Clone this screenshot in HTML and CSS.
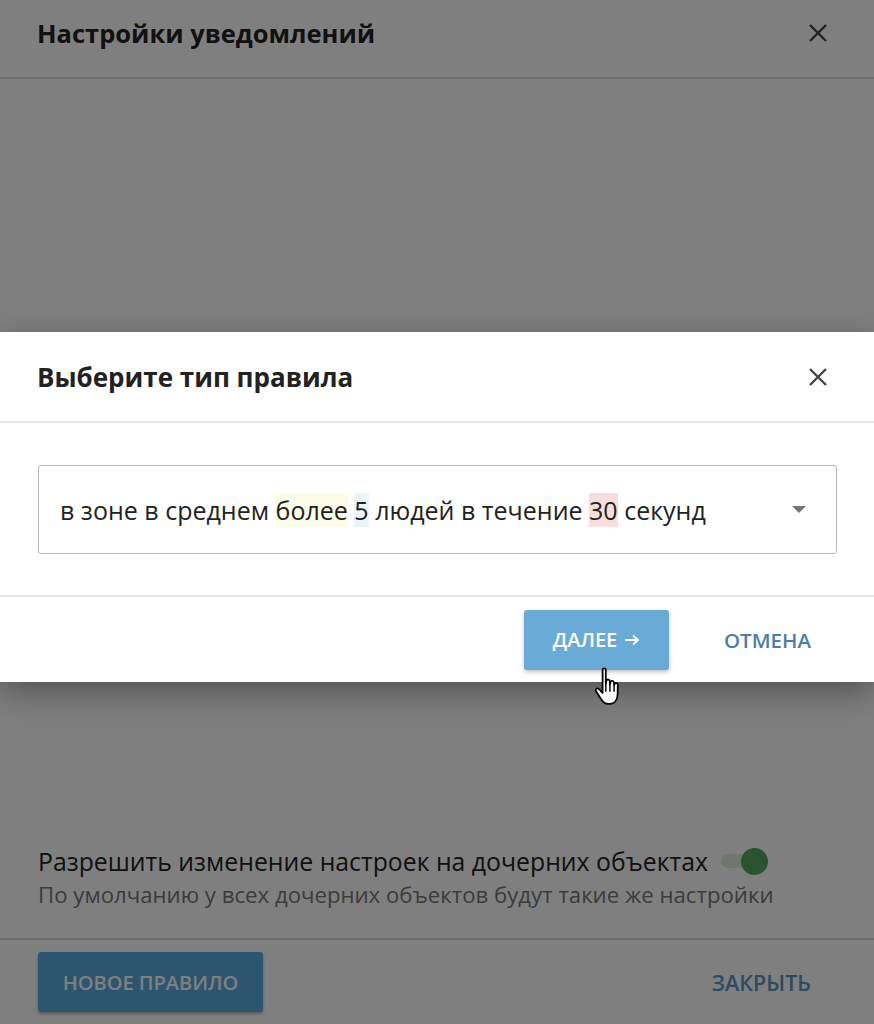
FILE: index.html
```html
<!DOCTYPE html>
<html lang="ru">
<head>
<meta charset="utf-8">
<link rel="stylesheet" href="styles.css">
</head>
<body>
<div class="page">
  <header class="page-head">
    <h1 class="page-title">Настройки уведомлений</h1>
    <svg class="close" viewBox="0 0 24 24" width="24" height="24"><path d="M4 4 L20 20 M20 4 L4 20" stroke="#444" stroke-width="2.4" fill="none"/></svg>
  </header>
  <main class="page-body"></main>
  <section class="inherit">
    <div class="inherit-row">
      <span class="inherit-label">Разрешить изменение настроек на дочерних объектах</span>
      <span class="toggle"><span class="track"></span><span class="thumb"></span></span>
    </div>
    <div class="inherit-hint">По умолчанию у всех дочерних объектов будут такие же настройки</div>
  </section>
  <footer class="page-foot">
    <button class="btn-primary">НОВОЕ ПРАВИЛО</button>
    <button class="btn-text close-btn">ЗАКРЫТЬ</button>
  </footer>
</div>
<div class="overlay"></div>
<div class="modal">
  <div class="modal-head">
    <h2 class="modal-title">Выберите тип правила</h2>
    <svg class="close" viewBox="0 0 24 24" width="24" height="24"><path d="M4 4 L20 20 M20 4 L4 20" stroke="#444" stroke-width="2.4" fill="none"/></svg>
  </div>
  <div class="modal-body">
    <div class="select">
      <span class="select-text">в зоне в среднем <span class="hl-y">более</span> <span class="hl-b">5</span> людей в течение <span class="hl-r">30</span> секунд</span>
      <span class="caret"></span>
    </div>
  </div>
  <div class="modal-foot">
    <button class="btn-next">ДАЛЕЕ <svg class="arrow" viewBox="0 0 16 12" width="16" height="12"><path d="M1 6 H14 M9 1.5 L14 6 L9 10.5" stroke="#fff" stroke-width="1.8" fill="none"/></svg></button>
    <button class="btn-text cancel">ОТМЕНА</button>
  </div>
</div>
<svg class="cursor" viewBox="0 0 20 26" width="32" height="42"><path d="M6 2.2 C6 1 8 1 8 2.2 L8 11 L8.3 9.2 C8.5 8 10.4 8 10.5 9.3 L10.6 11.2 L10.9 10 C11.1 8.9 13 9 13.1 10.2 L13.2 12 L13.5 11.2 C13.8 10.2 15.5 10.4 15.5 11.6 L15.4 17.5 C15.3 20.5 13.8 23.5 10.5 23.5 L9.4 23.5 C7.6 23.5 6.4 22.6 5.2 20.8 L1.9 15.7 C1.2 14.6 2.6 13.2 3.6 14.2 L6 16.6 Z" fill="#fff" stroke="#000" stroke-width="1.1" stroke-linejoin="round"/><path d="M8 11 L8 16 M10.6 11.2 L10.6 16 M13.2 12 L13.2 16" stroke="#000" stroke-width="0.9"/></svg>
</body>
</html>
```
FILE: styles.css
```css
* { box-sizing: border-box; }
html, body { margin: 0; padding: 0; }
body {
  width: 874px;
  height: 1024px;
  overflow: hidden;
  background: #fff;
  font-family: "Open Sans", "Noto Sans", sans-serif;
  color: #222;
  position: relative;
}
.page {
  height: 1024px;
  display: flex;
  flex-direction: column;
}
.page-head {
  height: 79px;
  display: flex;
  align-items: flex-start;
  justify-content: space-between;
  padding: 15px 44px 0 37px;
  border-bottom: 2px solid #d8d8d8;
}
.page-head .close { margin-top: 6px; }
.page-title, .modal-title {
  margin: 0;
  font-size: 26px;
  line-height: 36px;
  font-weight: 700;
  color: #222;
}
.page-title { font-size: 25.5px; }
.close { display: block; }
.page-body { flex: 1; }
.inherit {
  padding: 0 38px 27px;
  border-bottom: 2px solid #d8d8d8;
}
.inherit-row {
  display: flex;
  align-items: center;
  gap: 13px;
  height: 36px;
}
.inherit-label { font-size: 24.8px; color: #222; }
.toggle {
  position: relative;
  width: 47px;
  height: 26px;
  display: inline-block;
}
.track {
  position: absolute;
  left: 0; top: 6px;
  width: 40px; height: 14px;
  border-radius: 7px;
  background: #dcf0de;
}
.thumb {
  position: absolute;
  right: 0; top: 0;
  width: 27px; height: 27px;
  border-radius: 50%;
  background: #52a85e;
}
.inherit-hint {
  margin-top: 0;
  font-size: 22.2px;
  line-height: 32px;
  color: #777;
}
.page-foot {
  height: 84px;
  display: flex;
  align-items: center;
  justify-content: space-between;
  padding: 0 63px 0 38px;
}
button { font-family: inherit; border: 0; cursor: pointer; }
.btn-primary {
  width: 225px;
  height: 60px;
  background: #58ace0;
  color: #fff;
  font-size: 20px;
  font-weight: 600;
  border-radius: 3px;
  box-shadow: 0 2px 3px rgba(0,0,0,0.3);
}
.btn-text {
  background: none;
  font-size: 20.5px;
  font-weight: 600;
  color: #5c94c0;
  padding: 0;
}
.close-btn { font-size: 21.5px; }
.overlay {
  position: absolute;
  inset: 0;
  background: rgba(0,0,0,0.5);
}
.modal {
  position: absolute;
  left: 0; top: 332px;
  width: 874px;
  height: 350px;
  background: #fff;
  box-shadow: 0 10px 30px rgba(0,0,0,0.35);
  display: flex;
  flex-direction: column;
}
.modal-head {
  height: 91px;
  display: flex;
  align-items: center;
  justify-content: space-between;
  padding: 0 44px 0 37px;
  border-bottom: 2px solid #e6e6e6;
}
.modal-body {
  padding: 42px 37px 41px 38px;
  border-bottom: 2px solid #e6e6e6;
}
.select {
  height: 89px;
  border: 1px solid #b5b5b5;
  border-radius: 3px;
  display: flex;
  align-items: center;
  justify-content: space-between;
  padding: 0 30px 0 21px;
}
.select-text { font-size: 25px; color: #222; }
.hl-y { background: #fbfde8; }
.hl-b { background: #e9f4fb; }
.hl-r { background: #f6dede; }
.caret {
  width: 0; height: 0;
  border-left: 7px solid transparent;
  border-right: 7px solid transparent;
  border-top: 7px solid #757575;
}
.modal-foot {
  flex: 1;
  display: flex;
  align-items: center;
  justify-content: flex-end;
  gap: 55px;
  padding: 0 63px 0 0;
}
.btn-next {
  width: 145px;
  height: 60px;
  background: #6aaad6;
  color: #fff;
  font-size: 20px;
  font-weight: 600;
  border-radius: 3px;
  box-shadow: 0 2px 4px rgba(0,0,0,0.25);
  display: flex;
  align-items: center;
  justify-content: center;
  gap: 7px;
}
.arrow { display: block; }
.cancel { color: #4a7ea6; }
.cursor {
  position: absolute;
  left: 593px;
  top: 666px;
}
```
